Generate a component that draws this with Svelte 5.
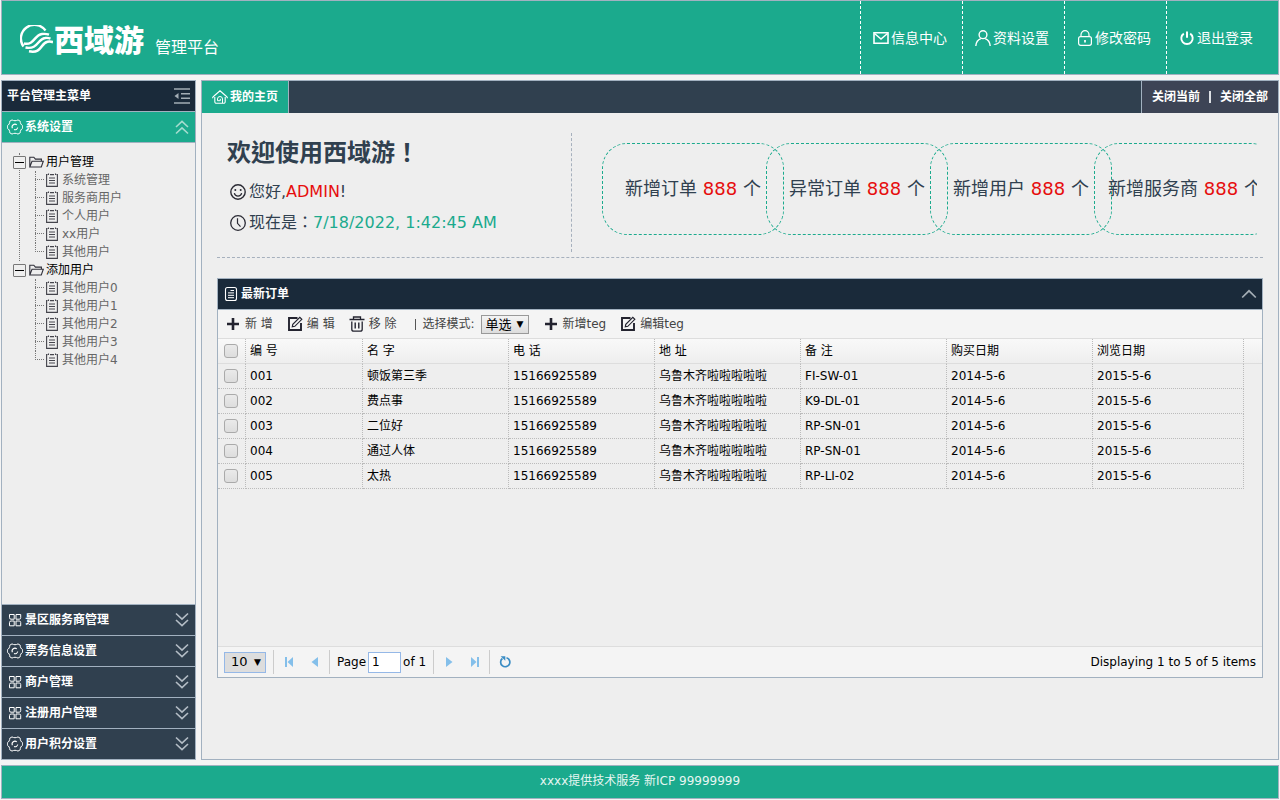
<script>
  const topLinks = [
    { icon: 'mail', label: '信息中心' },
    { icon: 'user', label: '资料设置' },
    { icon: 'lock', label: '修改密码' },
    { icon: 'power', label: '退出登录' }
  ];

  const sections = [
    { icon: 'gear', label: '系统设置' },
    { icon: 'blocks', label: '景区服务商管理' },
    { icon: 'gear', label: '票务信息设置' },
    { icon: 'blocks', label: '商户管理' },
    { icon: 'blocks', label: '注册用户管理' },
    { icon: 'gear', label: '用户积分设置' }
  ];

  let tree = $state([
    {
      label: '用户管理',
      open: true,
      children: ['系统管理', '服务商用户', '个人用户', 'xx用户', '其他用户']
    },
    {
      label: '添加用户',
      open: true,
      children: ['其他用户0', '其他用户1', '其他用户2', '其他用户3', '其他用户4']
    }
  ]);

  const stats = [
    { label: '新增订单', count: 888 },
    { label: '异常订单', count: 888 },
    { label: '新增用户', count: 888 },
    { label: '新增服务商', count: 888 }
  ];

  const columns = ['编 号', '名 字', '电 话', '地 址', '备 注', '购买日期', '浏览日期'];

  const orders = [
    ['001', '顿饭第三季', '15166925589', '乌鲁木齐啦啦啦啦啦', 'FI-SW-01', '2014-5-6', '2015-5-6'],
    ['002', '费点事', '15166925589', '乌鲁木齐啦啦啦啦啦', 'K9-DL-01', '2014-5-6', '2015-5-6'],
    ['003', '二位好', '15166925589', '乌鲁木齐啦啦啦啦啦', 'RP-SN-01', '2014-5-6', '2015-5-6'],
    ['004', '通过人体', '15166925589', '乌鲁木齐啦啦啦啦啦', 'RP-SN-01', '2014-5-6', '2015-5-6'],
    ['005', '太热', '15166925589', '乌鲁木齐啦啦啦啦啦', 'RP-LI-02', '2014-5-6', '2015-5-6']
  ];

  let activeSection = $state(0);
  let panelOpen = $state(true);
  let selected = $state(orders.map(() => false));
  let allSelected = $derived(selected.every(Boolean));

  function toggleAll(event) {
    const value = event.currentTarget.checked;
    selected = orders.map(() => value);
  }
</script>

{#snippet icon(name)}
  <svg class="icon" width="16" height="16" viewBox="0 0 16 16" fill="none" stroke="currentColor" aria-hidden="true">
    {#if name === 'mail'}
      <path d="M1 2.7h14v10.6H1z" stroke-width="1.6" />
      <path d="M1.5 3.5L8 9l6.5-5.5" stroke-width="1.5" />
    {:else if name === 'user'}
      <circle cx="8" cy="4.7" r="3.9" stroke-width="1.4" />
      <path d="M.8 16c.3-3.700 2.200-6.300 5-7.300M10.200 8.700c2.800 1 4.700 3.600 5 7.300" stroke-width="1.4" />
    {:else if name === 'lock'}
      <rect x="1.6" y="6.6" width="12.8" height="8.7" rx="2" stroke-width="1.2" />
      <path d="M4 6.500V4.800a4 4.200 0 0 1 8 0v1.700" stroke-width="1.2" />
      <path d="M8 10v2.500" stroke-width="1.7" />
    {:else if name === 'power'}
      <path d="M4.800 3.600a5.700 5.700 0 1 0 6.400 0" stroke-width="1.9" />
      <path d="M8 1.500v6.300" stroke-width="2" />
    {:else if name === 'gear'}
      <path d="M5 .9c2 1.100 4 1.100 6 0l2.200 1.300c0 2 .9 3.700 2.500 4.600v2.400c-1.600.9-2.500 2.600-2.500 4.600L11 15.100c-2-1.100-4-1.100-6 0l-2.200-1.300c0-2-.9-3.700-2.500-4.600V6.800c1.600-.9 2.500-2.600 2.500-4.600z" stroke-width="1" />
      <path d="M5.400 9.200A2.800 2.800 0 0 1 9.800 5.900M10.700 8.500a2.800 2.800 0 0 1-3.700 2.100" stroke-width="1.1" />
    {:else if name === 'blocks'}
      <path d="M2.500 2.500h4.700v4.700H4a1.500 1.500 0 0 1-1.500-1.500zM9 2.500h4.700v3.200a1.500 1.500 0 0 1-1.500 1.500H9zM2.500 13.800V10.500A1.500 1.500 0 0 1 4 9h3.200v4.800zM9 9h3.200a1.500 1.500 0 0 1 1.500 1.500v3.300H9z" stroke-width="1" />
    {:else if name === 'home'}
      <path d="M.5 9.300C.6 8 1 7.800 2 7l6-5.200L14 7c1 .8 1.400 1 1.500 2.300" stroke-width="1.1" />
      <path d="M2.800 8v4.800a1.500 1.500 0 0 0 1.500 1.500h7.400a1.500 1.500 0 0 0 1.500-1.500V8" stroke-width="1.1" />
      <path d="M10.500 14V10a2.500 2.500 0 0 0-5 0v1.700h2.800V9.800" stroke-width="1" />
    {:else if name === 'folder'}
      <path d="M.8 13V3.200h4l1.600 1.900h6v2M.8 13L3 7.200h11.300L12.300 13z" stroke-width="1.1" />
    {:else if name === 'doc'}
      <path d="M3.500 2.600H2.600v11.800h10.800V2.600h-.9M6 2.600h4M4.500 1.500v1.600M11.500 1.500v1.600" stroke-width="1.1" />
      <path d="M5 6h6M5 8.500h6M5 11h6" stroke-width="1" />
    {:else if name === 'file'}
      <rect x="2.500" y="1.500" width="11" height="13" rx="2" stroke-width="1.100" />
      <path d="M7.500 4.500H11M5 6.900h6M5 9.300h6M5 11.700h6" stroke-width="1" />
    {:else if name === 'smile'}
      <circle cx="8" cy="8" r="7.2" stroke-width="1.4" />
      <path d="M4.300 9.200a3.800 3.800 0 0 0 7.400 0" stroke-width="1.2" />
      <circle cx="5.300" cy="6" r="1" fill="currentColor" stroke="none" />
      <circle cx="10.700" cy="6" r="1" fill="currentColor" stroke="none" />
    {:else if name === 'clock'}
      <circle cx="8" cy="8" r="7.3" stroke-width="1.3" />
      <path d="M7.500 3.300v5l3 3.300" stroke-width="1.2" />
    {:else if name === 'plus'}
      <path d="M8 2v12M2 8h12" stroke-width="2.6" />
    {:else if name === 'edit'}
      <path d="M10.500 2H2v12h12V7" stroke-width="1.9" />
      <path d="M5.300 10.800l.5-2.600L12.800 1.300l2 2-7 7z" stroke-width="1.2" />
    {:else if name === 'trash'}
      <path d="M.5 3.500h15M4.500 3V1h7v2M2.800 5.500v7.700a2 2 0 0 0 2 2h6.400a2 2 0 0 0 2-2V5.500" stroke-width="1.3" />
      <path d="M6.200 6.500v6M9.800 6.500v6" stroke-width="1.4" />
    {:else if name === 'fold'}
      <path d="M0 1h16M7 5.700h9M7 10.300h9M0 15h16" stroke-width="1.4" />
      <path d="M4.500 5v6L.5 8z" fill="currentColor" stroke="none" />
    {:else if name === 'down2'}
      <path d="M2 1.500l6 5.700 6-5.700M2 8l6 5.700L14 8" stroke-width="1.6" />
    {:else if name === 'up2'}
      <path d="M2 8l6-5.700L14 8M2 14.500l6-5.700 6 5.700" stroke-width="1.6" />
    {:else if name === 'up'}
      <path d="M1.200 11.500L8 4.800l6.800 6.700" stroke-width="1.7" />
    {:else if name === 'first'}
      <path d="M4 3h2v10H4zM12 3v10L6.500 8z" fill="currentColor" stroke="none" />
    {:else if name === 'prev'}
      <path d="M11 3v10L4.500 8z" fill="currentColor" stroke="none" />
    {:else if name === 'next'}
      <path d="M5 3v10l6.500-5z" fill="currentColor" stroke="none" />
    {:else if name === 'last'}
      <path d="M10 3h2v10h-2zM4 3v10l5.500-5z" fill="currentColor" stroke="none" />
    {:else if name === 'reload'}
      <path d="M9.500 3.700a4.600 4.600 0 1 1-4.100.8" stroke-width="1.7" />
      <path d="M3.700 2.300h4.600v4.400z" fill="currentColor" stroke="none" />
    {/if}
  </svg>
{/snippet}

<div class="page">
  <header class="header">
    <div class="brand">
      <svg class="logo" width="33" height="30" viewBox="0 0 33 30" fill="none" stroke="#fff" aria-hidden="true">
        <path d="M25.500 5.500A12.800 12.800 0 0 0 3.500 21.500" stroke-width="2.4" />
        <path d="M4 18.500C14.500 20.500 14 10 22 9q4-.5 7 .7" stroke-width="2.400" />
        <path d="M5.500 22.500C18 25 17.500 14 25 13q3-.5 5.500.6" stroke-width="2.400" />
        <path d="M9 26.300C22 29 20.500 18 27.500 16.700q3-.5 5.500.5" stroke-width="2.600" />
      </svg>
      <strong>西域游</strong>
      <span>管理平台</span>
    </div>
    <nav class="top-nav">
      {#each topLinks as link}
        <a href="#{link.icon}">{@render icon(link.icon)}{link.label}</a>
      {/each}
    </nav>
  </header>

  <div class="middle">
    <aside class="sidebar">
      <div class="sidebar-title">
        <span>平台管理主菜单</span>
        <button type="button" aria-label="折叠菜单">{@render icon('fold')}</button>
      </div>
      {#each sections as section, i}
        <button type="button" class="section" class:active={activeSection === i} onclick={() => (activeSection = i)}>
          {@render icon(section.icon)}
          <span>{section.label}</span>
          {@render icon(activeSection === i ? 'up2' : 'down2')}
        </button>
        {#if activeSection === i}
          <div class="section-body">
            {#if i === 0}
              <ul class="tree">
                {#each tree as node}
                  <li class="branch">
                    <div class="node">
                      <button
                        type="button"
                        class="toggle"
                        class:closed={!node.open}
                        aria-label={node.label}
                        aria-expanded={node.open}
                        onclick={() => (node.open = !node.open)}
                      ></button>
                      {@render icon('folder')}
                      <span>{node.label}</span>
                    </div>
                    {#if node.open}
                      <ul class="leaves">
                        {#each node.children as child}
                          <li>{@render icon('doc')}<a href="#leaf">{child}</a></li>
                        {/each}
                      </ul>
                    {/if}
                  </li>
                {/each}
              </ul>
            {/if}
          </div>
        {/if}
      {/each}
    </aside>

    <main class="main">
      <div class="tabs">
        <a class="tab" href="#home">{@render icon('home')}我的主页</a>
        <div class="tab-actions">
          <button type="button">关闭当前</button>
          <i></i>
          <button type="button">关闭全部</button>
        </div>
      </div>

      <div class="content">
        <section class="summary">
          <div class="welcome">
            <h1>欢迎使用西域游！</h1>
            <p>{@render icon('smile')}<span>您好,<b class="name">ADMIN</b>!</span></p>
            <p>{@render icon('clock')}<span>现在是：<b class="time">7/18/2022, 1:42:45 AM</b></span></p>
          </div>
          <ul class="stats">
            {#each stats as stat}
              <li>{stat.label}&nbsp;<strong>{stat.count}</strong>&nbsp;个</li>
            {/each}
          </ul>
        </section>

        <section class="panel">
          <div class="panel-title">
            {@render icon('file')}
            <h2>最新订单</h2>
            <button type="button" aria-label="收起" onclick={() => (panelOpen = !panelOpen)}>{@render icon('up')}</button>
          </div>
          {#if panelOpen}
            <div class="toolbar">
              <button type="button">{@render icon('plus')}新 增</button>
              <button type="button">{@render icon('edit')}编 辑</button>
              <button type="button">{@render icon('trash')}移 除</button>
              <div class="mode">
                <i></i>
                <label for="mode">选择模式:</label>
                <span class="select">
                  <select id="mode">
                    <option>单选</option>
                    <option>多选</option>
                  </select>
                </span>
              </div>
              <button type="button">{@render icon('plus')}新增teg</button>
              <button type="button">{@render icon('edit')}编辑teg</button>
            </div>

            <div class="grid">
              <table>
                <colgroup>
                  <col class="check" />
                  <col class="code" />
                  <col span="5" class="field" />
                  <col />
                  <col class="filler" />
                </colgroup>
                <thead>
                  <tr>
                    <th><input type="checkbox" aria-label="全选" checked={allSelected} onchange={toggleAll} /></th>
                    {#each columns as column}
                      <th>{column}</th>
                    {/each}
                    <th></th>
                  </tr>
                </thead>
                <tbody>
                  {#each orders as order, i}
                    <tr>
                      <td><input type="checkbox" aria-label={order[0]} bind:checked={selected[i]} /></td>
                      {#each order as value}
                        <td>{value}</td>
                      {/each}
                      <td></td>
                    </tr>
                  {/each}
                </tbody>
              </table>
            </div>

            <div class="pager">
              <span class="select size">
                <select aria-label="每页条数">
                  <option>10</option>
                  <option>20</option>
                </select>
              </span>
              <div class="group">
                <button type="button" aria-label="首页">{@render icon('first')}</button>
                <button type="button" aria-label="上一页">{@render icon('prev')}</button>
              </div>
              <div class="group pages">
                <label for="page">Page</label>
                <input id="page" type="text" value="1" />
                <span>of 1</span>
              </div>
              <div class="group">
                <button type="button" aria-label="下一页">{@render icon('next')}</button>
                <button type="button" aria-label="末页">{@render icon('last')}</button>
              </div>
              <div class="group reload">
                <button type="button" aria-label="刷新">{@render icon('reload')}</button>
              </div>
              <span class="total">Displaying 1 to 5 of 5 items</span>
            </div>
          {/if}
        </section>
      </div>
    </main>
  </div>

  <footer class="footer">xxxx提供技术服务 新ICP 99999999</footer>
</div>

<style>
  :global(body) {
    background: #f4f4f4;
  }

  .page {
    box-sizing: border-box;
    display: flex;
    flex-direction: column;
    gap: 5px;
    min-height: 100vh;
    padding: 0 1px 1px;
    font-family: "DejaVu Sans", "Noto Sans CJK SC", sans-serif;
    font-size: 12px;
    line-height: 18px;
    color: #000;
  }

  .page *,
  .page *::before,
  .page *::after {
    box-sizing: border-box;
  }

  ul,
  h1,
  h2,
  p {
    margin: 0;
    padding: 0;
    list-style: none;
  }

  button {
    display: flex;
    align-items: center;
    padding: 0;
    border: 0;
    background: none;
    color: inherit;
    font: inherit;
    cursor: pointer;
  }

  a {
    color: inherit;
    text-decoration: none;
  }

  .icon {
    display: block;
    flex: none;
  }

  .header,
  .sidebar,
  .main,
  .footer {
    border: 1px solid #a2b1c0;
  }

  .header {
    display: flex;
    justify-content: space-between;
    height: 75px;
    background: #1baa8d;
    color: #fff;
  }

  .brand {
    display: flex;
    align-items: center;
    padding-left: 18px;
  }

  .logo {
    margin-top: 4px;
  }

  .brand strong {
    margin-left: 1px;
    font-family: "Noto Sans CJK SC", sans-serif;
    font-size: 30px;
    font-weight: 900;
    line-height: 40px;
  }

  .brand span {
    margin-left: 11px;
    padding-top: 20px;
    font-size: 16px;
  }

  .top-nav {
    display: flex;
    padding-right: 10px;
    font-size: 14px;
  }

  .top-nav a {
    display: flex;
    align-items: center;
    gap: 2px;
    width: 102px;
    padding-left: 12px;
    border-left: 1px dashed #fff;
  }

  .middle {
    display: flex;
    flex: 1;
    gap: 5px;
  }

  .sidebar {
    display: flex;
    flex: none;
    flex-direction: column;
    width: 195px;
    background: #eee;
  }

  .sidebar-title {
    display: flex;
    align-items: center;
    justify-content: space-between;
    height: 30px;
    padding: 0 5px;
    background: #1a2a3a;
    color: #fff;
    font-weight: bold;
  }

  .sidebar-title button {
    color: #a3adb5;
  }

  .section {
    flex: none;
    gap: 2px;
    height: 31px;
    padding: 0 5px;
    border-top: 1px solid #a2b1c0;
    background: #30404f;
    color: #fff;
    font-weight: bold;
    text-align: left;
  }

  .section span {
    flex: 1;
  }

  .section .icon:last-child {
    color: #b4bdc6;
  }

  .section.active {
    background: #1baa8d;
  }

  .section.active .icon:last-child {
    color: #a6dccf;
  }

  .section-body {
    flex: 1;
    padding: 10px 11px;
    border-top: 1px solid #a2b1c0;
  }

  .branch {
    position: relative;
  }

  .branch:not(:last-child)::before {
    content: "";
    position: absolute;
    top: 0;
    bottom: 0;
    left: 6px;
    border-left: 1px dotted #777;
  }

  .node {
    display: flex;
    align-items: center;
    gap: 1px;
    height: 18px;
  }

  .node .icon {
    margin-left: 2px;
    color: #30303a;
  }

  .toggle {
    position: relative;
    justify-content: center;
    width: 13px;
    height: 13px;
    border: 1px solid #777;
    border-radius: 1px;
    background: #eee;
  }

  .toggle::before {
    content: "";
    width: 9px;
    border-top: 1px solid #000;
  }

  .toggle.closed::after {
    content: "";
    position: absolute;
    top: 1px;
    bottom: 1px;
    left: 5px;
    border-left: 1px solid #000;
  }

  .leaves {
    margin-left: 22px;
    color: #666;
  }

  .leaves li {
    position: relative;
    display: flex;
    align-items: center;
    gap: 2px;
    height: 18px;
    padding-left: 9px;
  }

  .leaves li::before {
    content: "";
    position: absolute;
    top: 0;
    bottom: 0;
    left: 0;
    border-left: 1px dotted #777;
  }

  .leaves li:last-child::before {
    bottom: 9px;
  }

  .leaves li::after {
    content: "";
    position: absolute;
    top: 8px;
    left: 0;
    width: 9px;
    border-top: 1px dotted #777;
  }

  .leaves .icon {
    color: #44444c;
  }

  .main {
    display: flex;
    flex: 1;
    flex-direction: column;
    min-width: 0;
    background: #eee;
  }

  .tabs {
    display: flex;
    justify-content: space-between;
    height: 32px;
    background: #30404f;
    color: #fff;
    font-weight: bold;
  }

  .tab {
    display: flex;
    align-items: center;
    gap: 2px;
    padding: 0 10px;
    border-right: 1px solid #a2b1c0;
    background: #1baa8d;
  }

  .tab-actions {
    display: flex;
    align-items: center;
    gap: 9px;
    padding: 0 10px;
    border-left: 1px solid #a2b1c0;
    background: #3d4455;
  }

  .tab-actions i {
    width: 2px;
    height: 12px;
    background: #dde0e4;
  }

  .content {
    display: flex;
    flex-direction: column;
    gap: 20px;
    padding: 20px 15px;
  }

  .summary {
    display: flex;
    padding-bottom: 5px;
    border-bottom: 1px dashed #a6b0bd;
  }

  .welcome {
    flex: none;
    width: 355px;
    height: 119px;
    padding-left: 10px;
    border-right: 1px dashed #a6b0bd;
    color: #30404f;
    font-family: "DejaVu Sans", "Noto Sans CJK TC", sans-serif;
    font-size: 16px;
    line-height: 31px;
  }

  .welcome h1 {
    padding-bottom: 3px;
    font-size: 24px;
    line-height: 40px;
  }

  .welcome p {
    display: flex;
    align-items: center;
    gap: 3px;
    padding-left: 3px;
  }

  .welcome .icon {
    color: #2b2b35;
  }

  .welcome b {
    font-weight: normal;
  }

  .name {
    color: #e60d0d;
  }

  .time {
    color: #1baa8d;
  }

  .stats {
    display: flex;
    flex: 1;
    min-width: 0;
    margin-right: 6px;
    padding: 10px 0 10px 30px;
    overflow: hidden;
  }

  .stats li {
    flex: none;
    width: 182px;
    height: 92px;
    margin-right: -18px;
    border: 1px dashed #1baa8d;
    border-radius: 25px;
    color: #30404f;
    font-size: 18px;
    line-height: 90px;
    text-align: center;
    white-space: nowrap;
  }

  .stats strong {
    color: #e60d0d;
    font-weight: normal;
  }

  .panel {
    border: 1px solid #a2b1c0;
  }

  .panel-title {
    display: flex;
    align-items: center;
    gap: 2px;
    height: 31px;
    padding: 0 5px;
    border-bottom: 1px solid #a2b1c0;
    background: #1a2a3a;
    color: #fff;
  }

  .panel-title h2 {
    flex: 1;
    font-size: 12px;
  }

  .panel-title button {
    color: #a3adb5;
  }

  .toolbar {
    display: flex;
    align-items: center;
    gap: 14px;
    height: 29px;
    padding-left: 7px;
    border-bottom: 1px solid #ddd;
    background: #f4f4f4;
    color: #444;
  }

  .toolbar button {
    gap: 4px;
  }

  .toolbar button .icon {
    color: #23232f;
  }

  .mode {
    display: flex;
    align-items: center;
    gap: 6px;
    padding-left: 5px;
  }

  .mode i {
    width: 1px;
    height: 11px;
    background: #555;
  }

  .select {
    position: relative;
    display: flex;
  }

  .select::after {
    content: "▼";
    position: absolute;
    top: 0;
    right: 5px;
    color: #000;
    font-size: 9px;
    line-height: 18px;
    pointer-events: none;
  }

  select {
    appearance: none;
    width: 48px;
    height: 19px;
    margin: 0;
    padding: 0 0 0 4px;
    border: 1px solid #999;
    border-radius: 0;
    background: linear-gradient(#f4f4f4, #ddd);
    color: #000;
    font: inherit;
    font-size: 13px;
  }

  .size select {
    width: 42px;
    height: 21px;
    padding-left: 6px;
    border-color: #95b8e7;
    background: #ddd;
  }

  .size::after {
    line-height: 20px;
  }

  .grid {
    min-height: 307px;
  }

  table {
    width: 100%;
    table-layout: fixed;
    border-collapse: separate;
    border-spacing: 0;
  }

  .check {
    width: 28px;
  }

  .code {
    width: 117px;
  }

  .field {
    width: 146px;
  }

  .filler {
    width: 18px;
  }

  th,
  td {
    height: 25px;
    padding: 0 4px;
    border-right: 1px dotted #bbb;
    border-bottom: 1px dotted #bbb;
    font-weight: normal;
    text-align: left;
    white-space: nowrap;
  }

  th {
    border-bottom: 1px solid #ddd;
    background: linear-gradient(#f9f9f9, #eee);
  }

  th:first-child,
  td:first-child {
    padding: 0 6px;
  }

  th:last-child {
    border-right: 0;
  }

  td:last-child {
    border: 0;
  }

  input[type="checkbox"] {
    appearance: none;
    display: block;
    width: 14px;
    height: 14px;
    margin: 0;
    border: 1px solid #aaa;
    border-radius: 3px;
    background: linear-gradient(#eaeaea, #ddd);
  }

  input[type="checkbox"]:checked {
    background: #1baa8d;
  }

  .pager {
    display: flex;
    align-items: center;
    height: 31px;
    padding: 0 6px;
    border-top: 1px solid #ddd;
    background: #f4f4f4;
  }

  .group {
    display: flex;
    align-items: center;
    gap: 10px;
    height: 24px;
    margin-left: 7px;
    padding-left: 7px;
    border-left: 1px solid #ccc;
    color: #84bfea;
  }

  .pages {
    gap: 2px;
    margin-left: 6px;
    color: #000;
  }

  .reload {
    margin-left: 6px;
    color: #3a8cc4;
  }

  .pages input {
    width: 33px;
    height: 21px;
    padding: 0 3px;
    border: 1px solid #95b8e7;
    background: #fff;
    color: #000;
    font: inherit;
  }

  .total {
    margin-left: auto;
  }

  .footer {
    height: 34px;
    background: #1baa8d;
    color: #e6f6f2;
    line-height: 30px;
    text-align: center;
  }
</style>
